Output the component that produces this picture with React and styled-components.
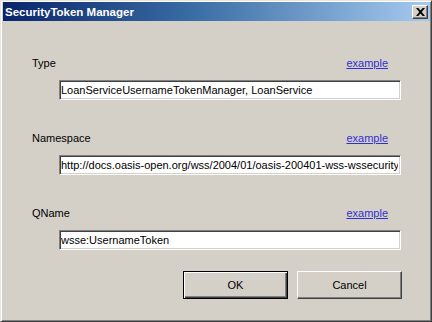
import React from 'react';
import styled, { createGlobalStyle } from 'styled-components';

const GlobalStyle = createGlobalStyle`
  html, body {
    margin: 0;
    padding: 0;
    background: #d4d0c8;
  }
`;

const WindowStyled = styled.div`
  box-sizing: border-box;
  width: 432px;
  height: 322px;
  padding: 1px;
  background: #d4d0c8;
  border-top: 1px solid #e8e6e1;
  border-left: 1px solid #e8e6e1;
  border-right: 1px solid #404040;
  border-bottom: 1px solid #404040;
  box-shadow: inset 1px 1px 0 #ffffff, inset -1px -1px 0 #808080;
  font-family: 'Liberation Sans', Arial, sans-serif;
  font-size: 11px;
  color: #000;
  display: flex;
  flex-direction: column;
`;

const TitleBarStyled = styled.div`
  height: 19px;
  margin-left: 1px;
  display: flex;
  align-items: center;
  justify-content: space-between;
  padding: 0 2px 0 2px;
  background: linear-gradient(to right, #0a246a 0%, #3a6ea5 45%, #a6caf0 100%);
`;

const TitleStyled = styled.span`
  color: #fff;
  font-weight: bold;
  font-size: 11.5px;
`;

const CloseButtonStyled = styled.div`
  box-sizing: border-box;
  width: 16px;
  height: 14px;
  background: #d4d0c8;
  border-top: 1px solid #fff;
  border-left: 1px solid #fff;
  border-right: 1px solid #404040;
  border-bottom: 1px solid #404040;
  box-shadow: inset -1px -1px 0 #808080;
  display: flex;
  align-items: center;
  justify-content: center;
`;

const ContentStyled = styled.div`
  padding: 35px 29px 0 30px;
  display: flex;
  flex-direction: column;
`;

const FieldListStyled = styled.div`
  display: flex;
  flex-direction: column;
  gap: 31px;
`;

const FieldStyled = styled.div`
  display: flex;
  flex-direction: column;
`;

const FieldHeaderStyled = styled.div`
  height: 14px;
  display: flex;
  align-items: center;
  justify-content: space-between;
  margin-right: 13px;
  margin-bottom: 10px;
`;

const LinkStyled = styled.a`
  color: #3030d0;
  text-decoration: underline;
  cursor: pointer;
`;

const InputStyled = styled.input`
  box-sizing: border-box;
  height: 20px;
  margin-left: 27px;
  padding: 0 2px 0 1px;
  font-family: 'Liberation Sans', Arial, sans-serif;
  font-size: 11px;
  color: #000;
  background: #fff;
  border-top: 1px solid #808080;
  border-left: 1px solid #808080;
  border-right: 1px solid #ffffff;
  border-bottom: 1px solid #ffffff;
  box-shadow: inset 1px 1px 0 #404040, inset -1px -1px 0 #d4d0c8;
  outline: none;
`;

const ButtonRowStyled = styled.div`
  display: flex;
  justify-content: flex-end;
  gap: 9px;
  margin-top: 21px;
  margin-right: -1px;
`;

const ButtonStyled = styled.button`
  box-sizing: border-box;
  width: 105px;
  height: 28px;
  padding: 0;
  font-family: 'Liberation Sans', Arial, sans-serif;
  font-size: 11px;
  color: #000;
  background: #d4d0c8;
  border-top: 1px solid ${({ $default }) => ($default ? '#000' : '#fff')};
  border-left: 1px solid ${({ $default }) => ($default ? '#000' : '#fff')};
  border-right: 1px solid ${({ $default }) => ($default ? '#000' : '#404040')};
  border-bottom: 1px solid ${({ $default }) => ($default ? '#000' : '#404040')};
  box-shadow: ${({ $default }) =>
    $default
      ? 'inset 1px 1px 0 #fff, inset -1px -1px 0 #404040, inset -2px -2px 0 #808080'
      : 'inset -1px -1px 0 #808080'};
`;

const fields = [
  { label: 'Type', value: 'LoanServiceUsernameTokenManager, LoanService' },
  {
    label: 'Namespace',
    value:
      'http://docs.oasis-open.org/wss/2004/01/oasis-200401-wss-wssecurity-secext-1.0.xsd',
  },
  { label: 'QName', value: 'wsse:UsernameToken' },
];

const App = () => (
  <>
    <GlobalStyle />
    <WindowStyled>
      <TitleBarStyled>
        <TitleStyled>SecurityToken Manager</TitleStyled>
        <CloseButtonStyled>
          <svg width="9" height="8" viewBox="0 0 9 8">
            <path d="M0 0h2.3l2.2 2.6L6.7 0H9L5.7 4 9 8H6.7L4.5 5.4 2.3 8H0l3.3-4z" fill="#000" />
          </svg>
        </CloseButtonStyled>
      </TitleBarStyled>
      <ContentStyled>
        <FieldListStyled>
          {fields.map((field) => (
            <FieldStyled key={field.label}>
              <FieldHeaderStyled>
                <span>{field.label}</span>
                <LinkStyled>example</LinkStyled>
              </FieldHeaderStyled>
              <InputStyled defaultValue={field.value} readOnly />
            </FieldStyled>
          ))}
        </FieldListStyled>
        <ButtonRowStyled>
          <ButtonStyled $default>OK</ButtonStyled>
          <ButtonStyled>Cancel</ButtonStyled>
        </ButtonRowStyled>
      </ContentStyled>
    </WindowStyled>
  </>
);

export default App;
